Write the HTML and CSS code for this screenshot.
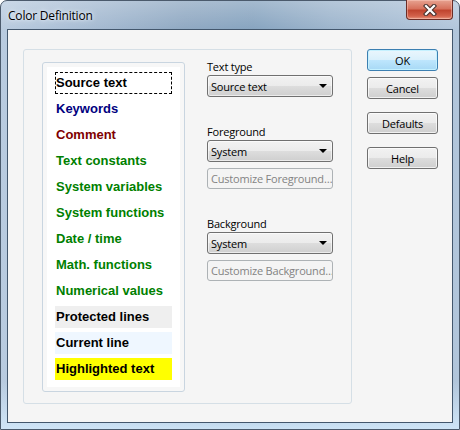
FILE: index.html
```html
<!DOCTYPE html>
<html lang="en">
<head>
    <meta charset="UTF-8">
    <title>Color Definition</title>
    <link rel="stylesheet" href="styles.css">
</head>
<body>
    <div class="window">
        <div class="titlebar">
            <span class="title">Color Definition</span>
            <div class="close-btn">
                <svg width="14" height="12" viewBox="0 0 14 12">
                    <path d="M3 2 L11 10 M11 2 L3 10" stroke="#4a3430" stroke-width="4.4" stroke-linecap="square"/>
                    <path d="M3 2 L11 10 M11 2 L3 10" stroke="#ffffff" stroke-width="2.2" stroke-linecap="square"/>
                </svg>
            </div>
        </div>

        <div class="client">
            <div class="panel">
                <div class="listbox">
                    <div class="list">
                        <div class="item focus">Source text</div>
                        <div class="item c-navy">Keywords</div>
                        <div class="item c-maroon">Comment</div>
                        <div class="item c-green">Text constants</div>
                        <div class="item c-green">System variables</div>
                        <div class="item c-green">System functions</div>
                        <div class="item c-green">Date / time</div>
                        <div class="item c-green">Math. functions</div>
                        <div class="item c-green">Numerical values</div>
                        <div class="item bg-protected">Protected lines</div>
                        <div class="item bg-current">Current line</div>
                        <div class="item bg-highlight">Highlighted text</div>
                    </div>
                </div>

                <div class="fields">
                    <div class="label">Text type</div>
                    <div class="combo"><span>Source text</span><i class="arrow"></i></div>

                    <div class="label gap">Foreground</div>
                    <div class="combo"><span>System</span><i class="arrow"></i></div>
                    <div class="btn-disabled">Customize Foreground…</div>

                    <div class="label gap">Background</div>
                    <div class="combo"><span>System</span><i class="arrow"></i></div>
                    <div class="btn-disabled">Customize Background…</div>
                </div>
            </div>

            <div class="buttons">
                <div class="btn btn-default">OK</div>
                <div class="btn">Cancel</div>
                <div class="btn sep">Defaults</div>
                <div class="btn sep">Help</div>
            </div>
        </div>
    </div>
</body>
</html>
```

FILE: styles.css
```css
* { margin: 0; padding: 0; box-sizing: border-box; }
body { width: 460px; height: 430px; overflow: hidden; background: #ffffff; font-family: "Open Sans", "Liberation Sans", sans-serif; }

.window { width: 460px; height: 430px; border: 1px solid #4b5a6c; border-radius: 7px 7px 0 0;
    background: linear-gradient(to bottom, rgba(255,255,255,0.25) 0, rgba(255,255,255,0) 30px, rgba(0,0,0,0) 380px, rgba(210,232,250,0.9) 100%),
                linear-gradient(to right, #b9cbdf 0%, #a7bcd3 18%, #8fa8c2 40%, #86a3bf 55%, #9cb4cc 72%, #b2c6db 100%); }

.titlebar { height: 28px; display: flex; align-items: flex-start; }
.title { margin: 6px 0 0 7px; font-size: 12px; letter-spacing: -0.2px; color: #000; text-shadow: 0 0 6px #e8f0f8, 0 0 3px #e8f0f8; }
.close-btn { margin-left: auto; margin-right: 6px; margin-top: -1px; width: 47px; height: 20px; display: flex; align-items: center; justify-content: center;
    border: 1px solid #6b2d26; border-top: none; border-radius: 0 0 4px 4px;
    background: linear-gradient(to bottom, #e7a391 0%, #d7725d 45%, #c0452f 55%, #d3624b 85%, #e8977f 100%);
    box-shadow: inset 0 0 0 1px rgba(255,210,200,0.45); }

.client { margin: 0 6px; width: 446px; height: 394px; border: 1px solid #43576d; background: #f5f5f5; display: flex; padding: 19px 0 0 15px; }

.panel { width: 329px; height: 355px; border: 1px solid #d5dfe6; border-radius: 3px; display: flex; padding: 12px 0 0 18px; }

.listbox { width: 143px; height: 330px; border: 1px solid #c9d5e0; border-radius: 3px; background: #f7f7f7; padding: 4px; }
.list { height: 100%; background: #ffffff; padding: 5px 8px 0 8px; }
.item { height: 22px; line-height: 22px; margin-bottom: 4px; padding-left: 1px; font-family: "Liberation Sans", Arial, sans-serif; font-size: 13px; font-weight: bold; color: #000; white-space: nowrap; }
.item.focus { border: 1px dashed #000; line-height: 20px; padding-left: 0; }
.c-navy { color: #000080; }
.c-maroon { color: #800000; }
.c-green { color: #008000; }
.bg-protected { background: #efefef; }
.bg-current { background: #eff7ff; }
.bg-highlight { background: #ffff00; }

.fields { margin: -2px 0 0 22px; width: 126px; }
.label { font-size: 11px; letter-spacing: -0.2px; line-height: 14px; margin-bottom: 1px; color: #000; }
.label.gap { margin-top: 28px; }
.combo { height: 22px; border: 1px solid #707070; border-radius: 3px; display: flex; align-items: center; justify-content: space-between; padding: 0 4px 0 3px;
    background: linear-gradient(to bottom, #f2f2f2 0%, #ebebeb 50%, #dddddd 51%, #cfcfcf 100%);
    box-shadow: inset 0 0 0 1px rgba(255,255,255,0.6); font-size: 11px; letter-spacing: -0.2px; color: #000; }
.arrow { width: 0; height: 0; border-left: 4px solid transparent; border-right: 4px solid transparent; border-top: 4px solid #000; margin-right: 1px; }
.btn-disabled { margin-top: 6px; height: 21px; border: 1px solid #adb2b5; border-radius: 3px; background: #f4f4f4; color: #838383; font-size: 11px; letter-spacing: -0.2px;
    display: flex; align-items: center; padding-left: 3px; white-space: nowrap; overflow: hidden; }

.buttons { margin-left: 15px; width: 71px; display: flex; flex-direction: column; }
.btn { height: 22px; margin-bottom: 6px; border: 1px solid #707070; border-radius: 3px; display: flex; align-items: center; justify-content: center;
    background: linear-gradient(to bottom, #f2f2f2 0%, #ebebeb 50%, #dddddd 51%, #cfcfcf 100%);
    box-shadow: inset 0 0 0 1px rgba(255,255,255,0.7); font-size: 11px; letter-spacing: -0.2px; color: #000; }
.btn.sep { margin-top: 7px; }
.btn-default { border-color: #3c7fb1; background: linear-gradient(to bottom, #eaf6fd 0%, #d9f0fc 50%, #bee6fd 51%, #a7d9f5 100%);
    box-shadow: inset 0 0 0 1px #c5f1ff; }
```
